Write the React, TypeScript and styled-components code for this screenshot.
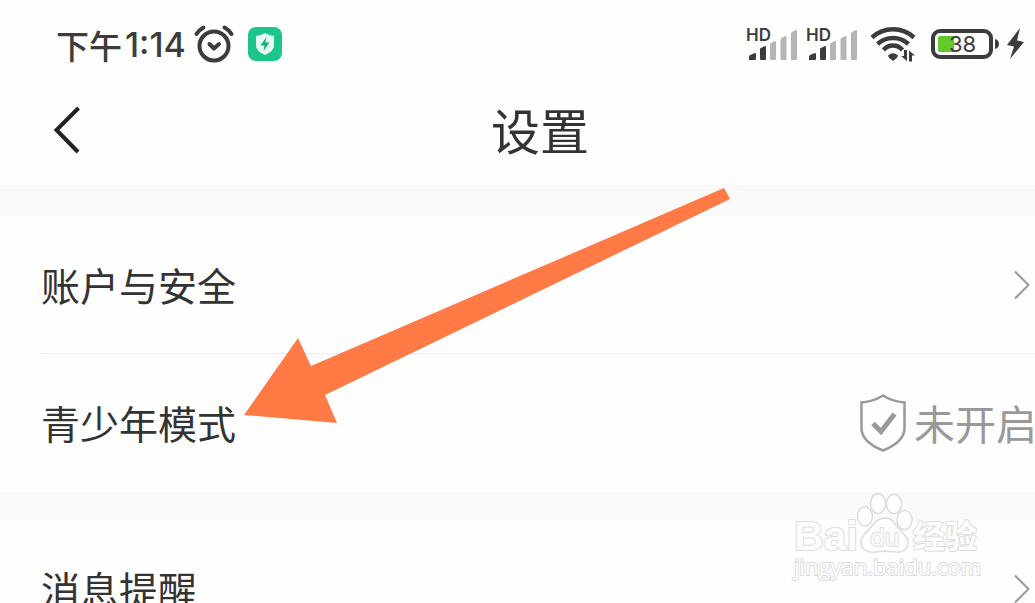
import React from "react";
import styled, { createGlobalStyle } from "styled-components";

const GlobalStyle = createGlobalStyle`
  * { box-sizing: border-box; }
  body {
    margin: 0;
    background: #fefefe;
    color: #333;
    font-family: "Noto Sans CJK SC", sans-serif;
  }
`;

const Page = styled.div`
  position: relative;
  height: 100vh;
  overflow: hidden;
`;

const StatusBar = styled.div`
  display: flex;
  align-items: center;
  height: 88px;
  padding: 0 10px 0 56px;
  color: #3c3c3c;
`;

const Clock = styled.time`
  display: flex;
  flex: none;
  align-items: center;
  gap: 3px;
  padding-top: 2px;
  line-height: 40px;
  white-space: nowrap;
`;

const Period = styled.span`
  font-size: 33px;
  font-weight: 500;
`;

const Digits = styled.span`
  font-family: Inter, sans-serif;
  font-size: 34px;
  font-weight: 500;
`;

const StatusGroup = styled.div<{ $gap: number }>`
  display: flex;
  align-items: center;
  gap: ${(p) => p.$gap}px;
`;

const Spacer = styled.div`
  flex: 1;
`;

const Icon = styled.svg`
  display: block;
  flex: none;
  overflow: visible;
`;

const Header = styled.header`
  display: grid;
  grid-template-columns: 1fr auto 1fr;
  align-items: center;
  height: 97px;
  padding: 0 8px 12px 53px;
`;

const BackButton = styled.button`
  justify-self: start;
  padding: 0;
  border: 0;
  background: none;
  color: #222;
  cursor: pointer;
`;

const Title = styled.h1`
  margin: 0;
  padding-bottom: 3px;
  font-size: 49px;
  font-weight: 400;
  line-height: 64px;
`;

const Band = styled.div<{ $height: number }>`
  height: ${(p) => p.$height}px;
  background: #f9f9f9;
`;

const List = styled.ul`
  margin: 0;
  padding: 0 0 1px 41px;
  list-style: none;
`;

const Item = styled.li`
  & + & {
    border-top: 1px solid #ededed;
  }
`;

const RowLink = styled.a`
  display: flex;
  align-items: center;
  height: 137px;
  padding-right: 5px;
  color: inherit;
  text-decoration: none;
`;

const Label = styled.span`
  flex: 1;
  padding-bottom: 1px;
  font-size: 39px;
  line-height: 56px;
`;

const State = styled.span`
  display: flex;
  align-items: center;
  gap: 8px;
  margin-right: -7px;
  color: #999;
  white-space: nowrap;
`;

const StateText = styled.span`
  padding-bottom: 2px;
  font-size: 41px;
  line-height: 56px;
`;

const Arrow = styled.svg`
  position: absolute;
  top: 188px;
  left: 244px;
  pointer-events: none;
`;

const Watermark = styled.div`
  position: absolute;
  top: 492px;
  right: 56px;
  width: 185px;
  pointer-events: none;
`;

const Signal = () => (
  <Icon width="51" height="34" viewBox="0 0 51 34" role="img" aria-label="HD">
    <text x="-1" y="14" fontFamily="Inter, sans-serif" fontSize="17" fontWeight="600" fill="#3c3c3c">HD</text>
    <path fill="#3c3c3c" d="M2 33v-3q0-1 1-2l5-2q1 0 1 1v5q0 1-1 1H3q-1 0-1 0zM13 32V22q0-1 1-1l4-2q1 0 1 1v12q0 1-1 1h-4q-1 0-1-1z" />
    <path fill="#b5b5b5" d="M23 32V18q0-1 1-2l4-2q1 0 1 1v17q0 1-1 1h-4q-1 0-1-1zM33.500 32V13q0-1 1-2l4-2q1 0 1 1v22q0 1-1 1h-4q-1 0-1-1zM44 32V7q0-1 1-2l4-2q1 0 1 1v28q0 1-1 1h-4q-1 0-1-1z" />
  </Icon>
);

const Chevron = () => (
  <Icon width="16" height="30" viewBox="0 0 16 30" fill="none" stroke="#999" strokeWidth="2" aria-hidden="true">
    <path d="M1 1.500 14.500 15 1 28.500" />
  </Icon>
);

const BaiduMark = () => (
  <Icon width="185" height="94" viewBox="0 0 185 94" role="img" aria-label="Baidu 经验">
    <g fill="#fefefe" stroke="#dcdcdc" strokeWidth="1.500">
      <ellipse cx="84" cy="11.500" rx="7.500" ry="10" />
      <ellipse cx="100" cy="12" rx="7.500" ry="9.500" />
      <ellipse cx="71" cy="24.500" rx="7.500" ry="9.500" />
      <ellipse cx="110.500" cy="28" rx="7.500" ry="9.500" />
      <path d="M91 26c7 0 10 5 13 10 4 5 10 8 10 14 0 7-5 11-12 10-8-1-14-1-21 0-8 1-14-3-14-10 0-6 5-9 9-14 4-5 8-10 15-10z" />
    </g>
    <g fill="#fefefe" stroke="#dcdcdc" strokeWidth="2" paintOrder="stroke" strokeLinejoin="round">
      <text x="0" y="58" fontFamily='"Liberation Sans", sans-serif' fontWeight="700" fontSize="41">Bai</text>
      <text x="76" y="54" fontFamily='"Open Sans", sans-serif' fontWeight="500" fontSize="24">du</text>
      <text x="119" y="56" fontFamily='"Noto Sans CJK SC", sans-serif' fontWeight="700" fontSize="32">经验</text>
      <text x="0" y="83" fontFamily='"Open Sans", sans-serif' fontSize="22">jingyan.baidu.com</text>
    </g>
  </Icon>
);

export default function App() {
  return (
    <Page>
      <GlobalStyle />
      <StatusBar>
        <StatusGroup $gap={8}>
          <Clock>
            <Period>下午</Period>
            <Digits>1:14</Digits>
          </Clock>
          <Icon width="40" height="38" viewBox="0 0 40 38" fill="none" stroke="#3c3c3c" strokeWidth="4" strokeLinecap="round" strokeLinejoin="round" aria-hidden="true">
            <circle cx="20" cy="21" r="14.500" />
            <path d="M2.500 9Q5 5 9.500 2.500M37.500 9Q35 5 30.500 2.500M15.500 19l4.500 4.500 5-4.500" />
          </Icon>
        </StatusGroup>
        <Icon width="48" height="34" viewBox="-14 0 48 34" aria-hidden="true">
          <rect width="34" height="34" rx="8" fill="#1cc68b" />
          <path d="M17 6q5 3 9 3v10q0 5-9 9-9-4-9-9V9q4 0 9-3z" fill="#e6fbf3" />
          <path d="M18.500 10 12.500 18.500h4L15.500 24l6-8.500h-4z" fill="#1cae7b" />
        </Icon>
        <Spacer />
        <StatusGroup $gap={9}>
          <Signal />
          <Signal />
        </StatusGroup>
        <Icon width="60" height="36" viewBox="-12 0 60 36" aria-hidden="true">
          <g fill="none" stroke="#3c3c3c" strokeWidth="4.500">
            <path d="M2 11.500A31 31 0 0 1 44 11.500M7.500 18A23 23 0 0 1 38.500 18M13.500 24A12.500 12.500 0 0 1 32.500 24" />
          </g>
          <path d="M18 29.500q5-4.500 10 0 0 2-5 5.500-5-3.500-5-5.500z" fill="#3c3c3c" />
          <path d="M37 24v11l-6-5h3v-6zM39 35.500v-11l6 5h-3v6z" fill="#3c3c3c" />
        </Icon>
        <Icon width="83" height="30" viewBox="-13 0 83 30" role="img" aria-label="38%">
          <rect x="2" y="2" width="58" height="26" rx="7" fill="none" stroke="#3c3c3c" strokeWidth="4" />
          <path d="M9 7h14v16H9q-2 0-2-2V9q0-2 2-2z" fill="#62c92c" />
          <path d="M64 10q4 1 4 5t-4 5z" fill="#3c3c3c" />
          <text x="18" y="23" fontFamily="Inter, sans-serif" fontSize="22" fontWeight="400" fill="#3c3c3c">38</text>
        </Icon>
        <Icon width="24" height="32" viewBox="-5 0 24 32" aria-hidden="true">
          <path d="M14 0 1 17l7 1.500L4 31 18 14l-7-1.500z" fill="#3c3c3c" />
        </Icon>
      </StatusBar>
      <Header>
        <BackButton type="button" aria-label="返回">
          <Icon width="28" height="48" viewBox="0 0 28 48" fill="none" stroke="currentColor" strokeWidth="4">
            <path d="M25.500 1 3.500 23l21.500 22" />
          </Icon>
        </BackButton>
        <Title>设置</Title>
      </Header>
      <Band $height={31} />
      <List>
        <Item>
          <RowLink href="#account">
            <Label>账户与安全</Label>
            <Chevron />
          </RowLink>
        </Item>
        <Item>
          <RowLink href="#teen">
            <Label>青少年模式</Label>
            <State>
              <Icon width="46" height="58" viewBox="0 0 46 58" fill="none" stroke="#999" aria-hidden="true">
                <path strokeWidth="2.500" d="M23 1.500Q32 7.500 44.500 8.500V34Q44.500 48 23 56.500 1.500 48 1.500 34V8.500Q14 7.500 23 1.500z" />
                <path strokeWidth="5" d="M13 29.500l8 8L34.500 20" />
              </Icon>
              <StateText>未开启</StateText>
            </State>
          </RowLink>
        </Item>
      </List>
      <Band $height={28} />
      <List>
        <Item>
          <RowLink href="#messages">
            <Label>消息提醒</Label>
            <Chevron />
          </RowLink>
        </Item>
      </List>
      <Arrow width="486" height="236" viewBox="0 0 486 236" aria-hidden="true">
        <path d="M480 0 486 11 81 207 93 235 0 227 54 150 67 178z" fill="#ff7a45" />
      </Arrow>
      <Watermark>
        <BaiduMark />
      </Watermark>
    </Page>
  );
}
